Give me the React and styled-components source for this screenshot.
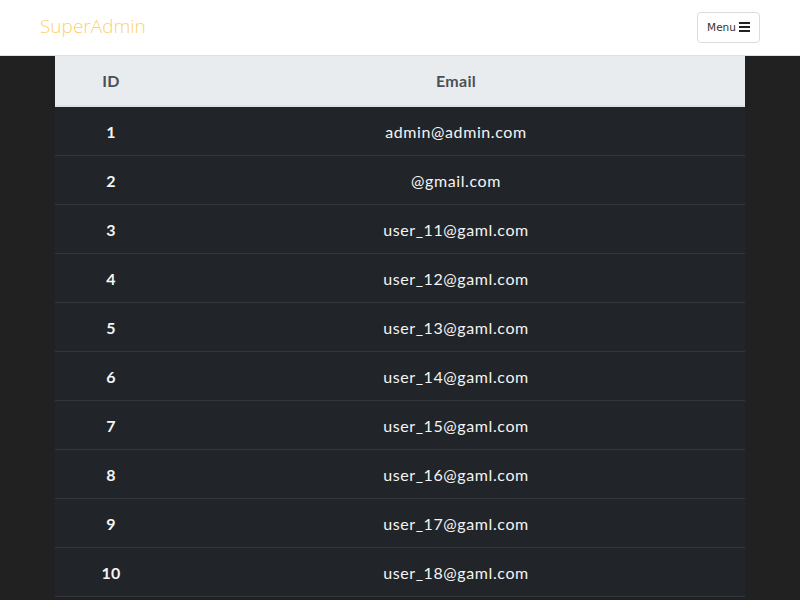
import React from 'react'
import styled, { createGlobalStyle } from 'styled-components'

const users = [
    'admin@admin.com',
    '@gmail.com',
    'user_11@gaml.com',
    'user_12@gaml.com',
    'user_13@gaml.com',
    'user_14@gaml.com',
    'user_15@gaml.com',
    'user_16@gaml.com',
    'user_17@gaml.com',
    'user_18@gaml.com',
]

function App() {
    return (
        <>
            <Global />
            <Nav>
                <Brand>SuperAdmin</Brand>
                <MenuButton>
                    Menu
                    <svg width="11" height="10" viewBox="0 0 11 10">
                        <rect x="0" y="0" width="11" height="2" fill="#222" />
                        <rect x="0" y="4" width="11" height="2" fill="#222" />
                        <rect x="0" y="8" width="11" height="2" fill="#222" />
                    </svg>
                </MenuButton>
            </Nav>
            <Main>
                <Table>
                    <thead>
                        <tr>
                            <Th $w="112px">ID</Th>
                            <Th>Email</Th>
                        </tr>
                    </thead>
                    <tbody>
                        {users.map((email, i) => (
                            <tr key={email}>
                                <IdCell>{i + 1}</IdCell>
                                <Td>{email}</Td>
                            </tr>
                        ))}
                    </tbody>
                </Table>
            </Main>
        </>
    )
}

export default App

const Global = createGlobalStyle`
    html, body {
        margin:0;
        height:100%;
        overflow:hidden;
        background-color:#212121;
        font-family:Lato, "Open Sans", sans-serif;
    }
`

const Nav = styled.nav`
    height:56px;
    box-sizing:border-box;
    background-color:#fff;
    border-bottom:1px solid #dee2e6;
    display:flex;
    align-items:center;
    justify-content:space-between;
    padding:0 40px 0 40px;
`

const Brand = styled.a`
    color:#fcd26c;
    font-family:"Open Sans", sans-serif;
    font-weight:300;
    font-size:19px;
    margin-top:-4px;
`

const MenuButton = styled.button`
    width:63px;
    height:31px;
    margin-top:-1px;
    box-sizing:border-box;
    background:#fff;
    border:1px solid #dcdcdc;
    border-radius:4px;
    font-family:"DejaVu Sans", sans-serif;
    font-size:10.5px;
    color:#333;
    display:flex;
    align-items:center;
    justify-content:center;
    gap:3px;
    padding:0;
`

const Main = styled.main`
    padding:0 55px;
`

const Table = styled.table`
    width:100%;
    border-collapse:collapse;
    background-color:#212529;
    color:#fff;
    text-align:center;
`

const Th = styled.th`
    width:${p => p.$w || 'auto'};
    height:49px;
    padding:0;
    background-color:#e9ecef;
    color:#495057;
    font-size:16px;
    font-weight:700;
    letter-spacing:0.3px;
    border-bottom:2px solid #dee2e6;
`

const Td = styled.td`
    height:48px;
    padding:0;
    font-size:16px;
    letter-spacing:0.6px;
    color:#f4f4f4;
    border-bottom:1px solid #32383e;
`

const IdCell = styled(Td)`
    font-weight:700;
    letter-spacing:0.3px;
`
